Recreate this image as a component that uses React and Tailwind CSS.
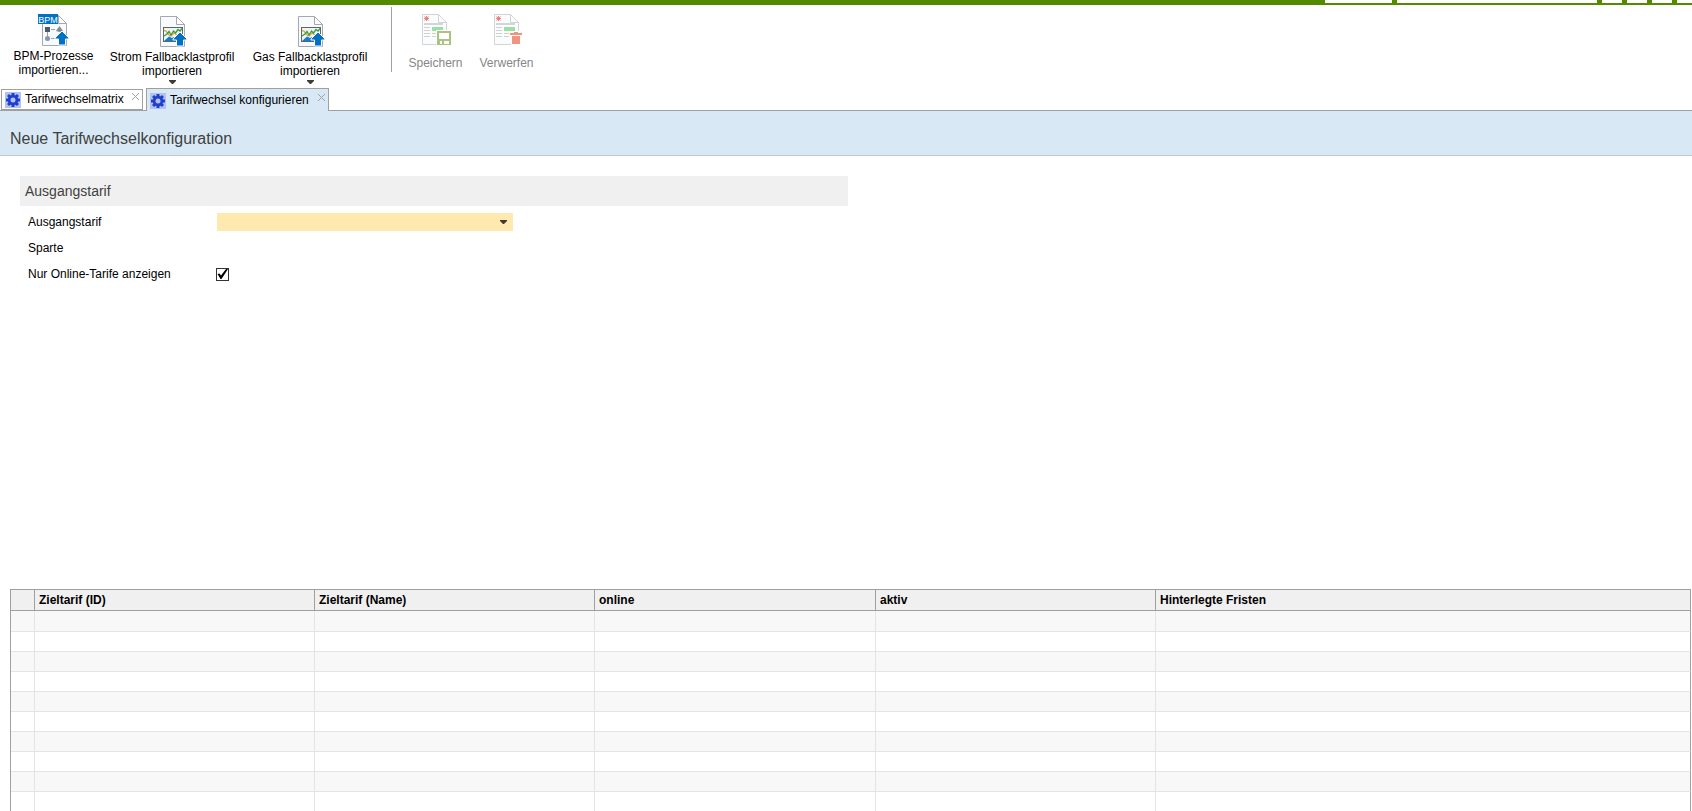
import { useState } from "react";

const columns = [
    { key: "id", label: "Zieltarif (ID)" },
    { key: "name", label: "Zieltarif (Name)" },
    { key: "online", label: "online" },
    { key: "aktiv", label: "aktiv" },
    { key: "fristen", label: "Hinterlegte Fristen" },
];

const EMPTY_ROWS = 10;

// Blank sheet with a folded corner, shared by all toolbar icons
function Sheet({ x = 4, y = 0 }) {
    return (
        <g transform={`translate(${x} ${y})`}>
            <path d="M0.5 0.5H16.5L24.5 8.5V30.5H0.5Z" fill="#f8fafc" stroke="#a3a9b0" />
            <path d="M16.5 0.5V8.5H24.5Z" fill="#ffffff" stroke="#a3a9b0" />
        </g>
    );
}

function UploadArrow({ y = 0 }) {
    return (
        <path
            transform={`translate(0 ${y})`}
            d="M24 16L31 23V24H27.5V30H20.500V24H17V23Z"
            fill="#0072c6"
            stroke="#ffffff"
        />
    );
}

function BpmIcon() {
    return (
        <svg width="32" height="32" viewBox="0 0 32 32" aria-hidden="true">
            <Sheet x={4} y={1} />
            <path d="M9.5 18V22M13 24.5H18M13 15.500H17" stroke="#9aa3ad" fill="none" />
            <rect x="7" y="13" width="5" height="5" fill="#4c5a6b" />
            <path d="M21.5 12L25 17L21.500 18L18 17Z" fill="#7f8b99" />
            <circle cx="9.5" cy="24.5" r="2.5" fill="#8296ad" />
            <rect x="0" y="0" width="20" height="10" fill="#0072c6" />
            <text x="10" y="8.5" textAnchor="middle" fontSize="9" fill="#ffffff" fontFamily="Liberation Sans, sans-serif">BPM</text>
            <UploadArrow y={1} />
        </svg>
    );
}

function ProfileIcon() {
    return (
        <svg width="32" height="32" viewBox="0 0 32 32" aria-hidden="true">
            <Sheet x={4} />
            <rect x="7.5" y="11.5" width="19" height="14" fill="#eef4f8" stroke="#5d6670" />
            <path d="M8 25L13 20.5L16 22L18 21L22 25Z" fill="#0f7fd6" />
            <path d="M8 14.5L10 15L13 19L15 20L18 17L21 19" stroke="#e8a33d" strokeWidth="1.3" fill="none" />
            <path d="M8 20L11 18L13 15.5L15 19L17.5 15L19.5 17L22 13.5L24 15L26 12.5" stroke="#3f9a35" strokeWidth="1.3" fill="none" />
            <UploadArrow />
        </svg>
    );
}

function DocumentLines() {
    return (
        <g>
            <path d="M4 4.5H9M6.5 2V7M4.5 2.5L8.5 6.5M8.5 2.5L4.5 6.5" stroke="#ec8080" />
            <rect x="4" y="9" width="19" height="2" fill="#d3d6d8" />
            <rect x="12" y="13" width="11" height="4" fill="#9adfa4" />
            <path d="M4 13.5H10M4 16.5H10M4 19.5H10M4 22.5H10M12 19.5H17M12 22.5H17" stroke="#d0d0d0" />
        </g>
    );
}

function SaveIcon() {
    return (
        <svg width="32" height="32" viewBox="0 0 32 32" aria-hidden="true">
            <g opacity="0.5"><Sheet x={2} /></g>
            <DocumentLines />
            <rect x="16" y="16" width="16" height="16" fill="#ffffff" />
            <rect x="17" y="17" width="14" height="14" fill="#a9c47f" />
            <rect x="19" y="19" width="10" height="6" fill="#ffffff" />
            <rect x="20" y="27" width="2" height="3" fill="#ffffff" />
            <rect x="24" y="27" width="5" height="3" fill="#ffffff" />
        </svg>
    );
}

function DiscardIcon() {
    return (
        <svg width="32" height="32" viewBox="0 0 32 32" aria-hidden="true">
            <g transform="translate(1 0)">
                <g opacity="0.5"><Sheet x={2} /></g>
                <DocumentLines />
            </g>
            <path d="M18 18H22V17H28V18H32V22H30V31H20V22H18Z" fill="#ffffff" />
            <g fill="#f0937f">
                <rect x="23" y="18" width="4" height="1" />
                <rect x="19" y="19" width="12" height="2" />
                <rect x="21" y="22" width="8" height="8" />
            </g>
        </svg>
    );
}

function GearIcon() {
    return (
        <svg width="16" height="16" viewBox="0 0 16 16" aria-hidden="true" className="shrink-0">
            <rect width="16" height="16" fill="#b4c2f0" />
            <g fill="#1d40d0">
                <rect x="6.5" y="1" width="3" height="14" />
                <rect x="6.5" y="1" width="3" height="14" transform="rotate(45 8 8)" />
                <rect x="6.5" y="1" width="3" height="14" transform="rotate(90 8 8)" />
                <rect x="6.5" y="1" width="3" height="14" transform="rotate(135 8 8)" />
                <circle cx="8" cy="8" r="5.3" />
            </g>
            <circle cx="8" cy="8" r="2.5" fill="#b4c2f0" />
        </svg>
    );
}

function CaretDown({ className = "" }) {
    return (
        <svg width="7" height="4" viewBox="0 0 7 4" aria-hidden="true" className={className}>
            <path d="M0 0H7V1L4 4H3L0 1Z" fill="#3c3c32" />
        </svg>
    );
}

function Tab({ label, active, onSelect, className }) {
    return (
        <div
            className={`flex items-start justify-between border border-[#a0a0a0] px-[3px] ${className} ${active ? "-mb-px h-[23px] border-b-0 bg-[#d8e9f5] pt-1" : "h-[21px] bg-white pt-[2px]"}`}
        >
            <button type="button" role="tab" aria-selected={active} onClick={onSelect} className="flex items-start gap-1">
                <GearIcon />
                <span className="whitespace-nowrap leading-[14px]">{label}</span>
            </button>
            <button type="button" aria-label={`${label} schließen`} className="pt-px">
                <svg width="7" height="7" viewBox="0 0 7 7" aria-hidden="true">
                    <path d="M0 0L7 7M7 0L0 7" stroke="#a0a0a0" fill="none" />
                </svg>
            </button>
        </div>
    );
}

// Lower edge of the search boxes and buttons in the title bar
function TitleBar() {
    return (
        <div className="flex h-[5px] shrink-0 items-start justify-end gap-[5px] bg-[#538a00]">
            <div className="h-[3px] w-[67px] bg-white" />
            <div className="h-[3px] w-[200px] bg-white" />
            <div className="h-[3px] w-5 bg-white" />
            <div className="h-[3px] w-5 bg-white" />
            <div className="h-[3px] w-5 bg-white" />
            <div className="h-[3px] w-[15px] bg-white" />
        </div>
    );
}

function Toolbar() {
    return (
        <div className="flex h-[83px] shrink-0 items-start whitespace-nowrap pl-[13px] leading-[14px]">
            <div className="flex items-start gap-[14px] pt-[9px]">
                <button type="button" className="flex w-[81px] flex-col items-center gap-[3px]">
                    <BpmIcon />
                    <span>BPM-Prozesse<br />importieren...</span>
                </button>
                <button type="button" className="flex w-32 flex-col items-center gap-[2px] pt-[2px]">
                    <ProfileIcon />
                    <span>Strom Fallbacklastprofil<br />importieren</span>
                    <CaretDown />
                </button>
                <button type="button" className="flex w-[120px] flex-col items-center gap-[2px] pt-[2px]">
                    <ProfileIcon />
                    <span>Gas Fallbacklastprofil<br />importieren</span>
                    <CaretDown />
                </button>
            </div>
            <div className="ml-[21px] mr-4 mt-[2px] h-[65px] w-px bg-[#a0a0a0]" />
            <div className="flex items-start gap-4 pt-[9px] text-[#868686]">
                <button type="button" disabled className="flex w-[55px] flex-col items-center gap-[10px]">
                    <SaveIcon />
                    <span>Speichern</span>
                </button>
                <button type="button" disabled className="flex w-[55px] flex-col items-center gap-[10px]">
                    <DiscardIcon />
                    <span>Verwerfen</span>
                </button>
            </div>
        </div>
    );
}

function TariffForm() {
    const [tariff, setTariff] = useState("");
    const [onlineOnly, setOnlineOnly] = useState(true);

    return (
        <form className="flex-1 px-5 pt-5">
            <fieldset className="w-full max-w-[828px]">
                <h2 className="mb-[3px] h-[30px] bg-[#f0f0f0] pl-[5px] text-[14px] leading-[30px] text-[#404040]">Ausgangstarif</h2>
                <div className="grid auto-rows-[26px] grid-cols-[188px_1fr] items-center pl-2">
                    <label htmlFor="tariff">Ausgangstarif</label>
                    <div className="relative ml-px w-[296px]">
                        <select
                            id="tariff"
                            value={tariff}
                            onChange={(e) => setTariff(e.target.value)}
                            className="block h-[18px] w-full appearance-none bg-[#ffe9ae] px-1 outline-none"
                        >
                            <option value=""></option>
                        </select>
                        <CaretDown className="pointer-events-none absolute right-[6px] top-[7px]" />
                    </div>

                    <span>Sparte</span>
                    <span />

                    <label htmlFor="online-only">Nur Online-Tarife anzeigen</label>
                    <div className="relative size-[13px]">
                        <input
                            id="online-only"
                            type="checkbox"
                            checked={onlineOnly}
                            onChange={(e) => setOnlineOnly(e.target.checked)}
                            className="block size-[13px] appearance-none border border-[#333333] bg-white"
                        />
                        {onlineOnly && (
                            <svg width="13" height="13" viewBox="0 0 13 13" aria-hidden="true" className="pointer-events-none absolute inset-0">
                                <path d="M1.5 6L3.5 5.5L5 7.5L10 1H12L5.500 11H4.500Z" fill="#000000" />
                            </svg>
                        )}
                    </div>
                </div>
            </fieldset>
        </form>
    );
}

function TargetTable() {
    return (
        <div className="h-[222px] shrink-0 overflow-hidden pl-[10px] pr-px">
            <table className="w-full table-fixed border-separate border-spacing-0 border-l border-[#a0a0a0] text-left">
                <colgroup>
                    <col className="w-6" />
                    <col className="w-[280px]" />
                    <col className="w-[280px]" />
                    <col className="w-[281px]" />
                    <col className="w-[280px]" />
                    <col />
                </colgroup>
                <thead>
                    <tr className="h-[22px] bg-[#f0f0f0]">
                        <th className="border-y border-r border-[#a0a0a0] p-0" />
                        {columns.map((col) => (
                            <th key={col.key} scope="col" className="border-y border-r border-[#a0a0a0] px-1 py-0 font-bold">
                                {col.label}
                            </th>
                        ))}
                    </tr>
                </thead>
                <tbody>
                    {Array.from({ length: EMPTY_ROWS }, (_, row) => (
                        <tr key={row} className="h-5 odd:bg-[#f8f8f8] first:h-[21px]">
                            <td className="border-b border-r border-[#e4e4e4] p-0" />
                            {columns.map((col) => (
                                <td key={col.key} className="border-b border-r border-[#e4e4e4] p-0 last:border-r-[#a0a0a0]" />
                            ))}
                        </tr>
                    ))}
                </tbody>
            </table>
        </div>
    );
}

export default function App() {
    const [activeTab, setActiveTab] = useState("config");

    return (
        <div className="flex min-h-screen flex-col bg-white font-['Liberation_Sans',Arial,sans-serif] text-[12px] leading-4 text-black">
            <TitleBar />
            <Toolbar />

            <div role="tablist" className="flex h-[23px] shrink-0 items-end gap-[3px] border-b border-[#a0a0a0] pl-px">
                <Tab label="Tarifwechselmatrix" className="w-[142px]" active={activeTab === "matrix"} onSelect={() => setActiveTab("matrix")} />
                <Tab label="Tarifwechsel konfigurieren" className="w-[183px]" active={activeTab === "config"} onSelect={() => setActiveTab("config")} />
            </div>

            <header className="flex h-[45px] shrink-0 items-center border-b border-[#bccad4] bg-[#d8e9f5] px-[10px] pt-3">
                <h1 className="text-[16px] leading-5 text-[#404040]">Neue Tarifwechselkonfiguration</h1>
            </header>

            <TariffForm />
            <TargetTable />
        </div>
    );
}
